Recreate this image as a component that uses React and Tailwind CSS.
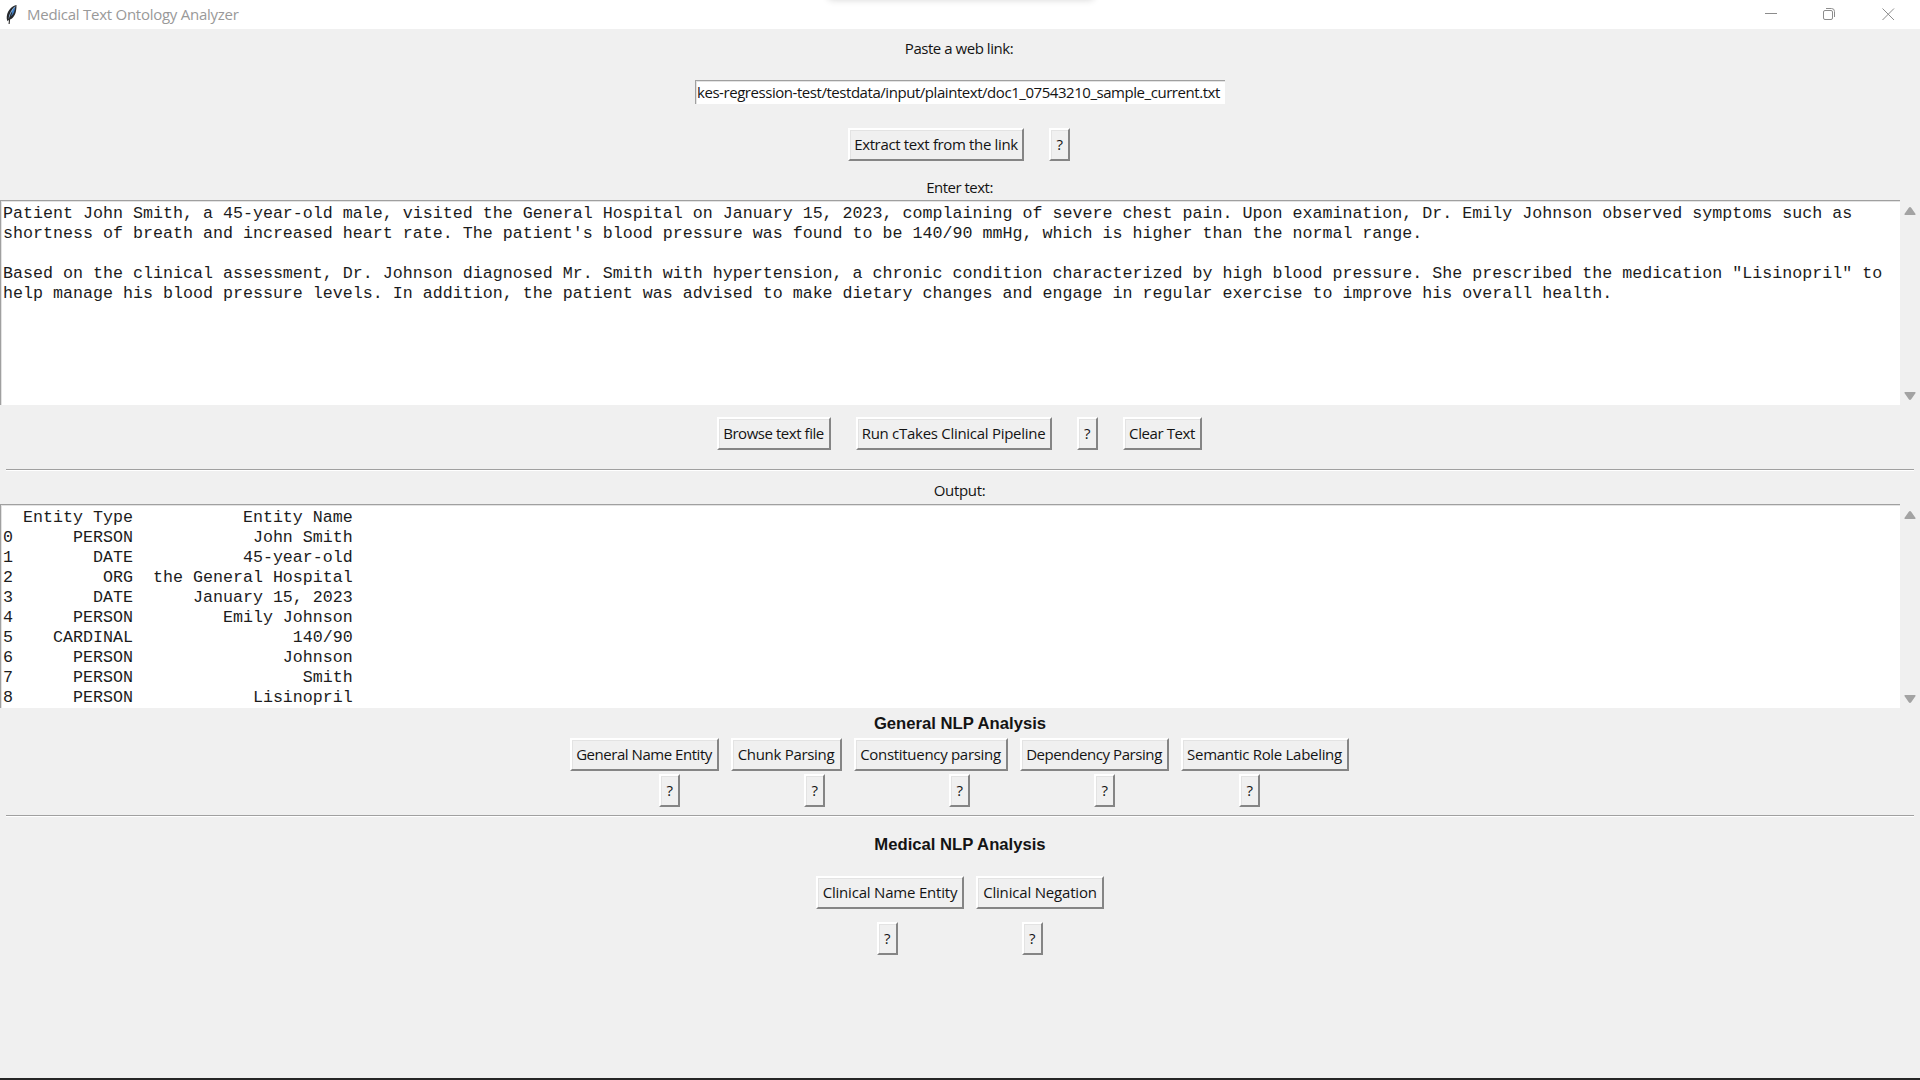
import React from "react";

const RAISED =
  "flex shrink-0 items-center justify-center whitespace-pre border-2 border-t-white border-l-white border-r-[#858585] border-b-[#858585] bg-[#f0f0f0] shadow-[inset_1px_1px_0_#e3e3e3]";

function Button({ children, className = "" }) {
  return <button className={`${RAISED} h-[33px] pb-px ${className}`}>{children}</button>;
}

function Help({ className = "" }) {
  return <Button className={`w-[21px] tracking-[-0.4px] ${className}`}>?</Button>;
}

function Separator({ className = "" }) {
  return <div className={`mx-[6px] h-[2px] border-t border-b border-t-[#a0a0a0] border-b-white ${className}`} />;
}

function Arrow({ down = false }) {
  return (
    <svg width="12" height="8" viewBox="0 0 12 8" fill="#a3a3a3">
      <path
        d={
          down
            ? "M1.2 0h9.6c.9 0 1 .7.6 1.3L7.2 7.2c-.7 1-1.7 1-2.4 0L.6 1.3C.2.7.3 0 1.2 0z"
            : "M1.2 8h9.6c.9 0 1-.7.6-1.3L7.2.8c-.7-1-1.7-1-2.4 0L.6 6.7C.2 7.3.3 8 1.2 8z"
        }
      />
    </svg>
  );
}

function TextPane({ text, className = "" }) {
  return (
    <div className={`flex w-full ${className}`}>
      <div className="h-full w-[1900px] overflow-hidden border-t border-l border-[#a0a0a0] bg-white pt-[3px] pl-[2px] shadow-[inset_1px_1px_0_#e3e3e3]">
        <pre className="font-['Liberation_Mono','Courier_New',monospace] text-[16.665px] leading-[20px] text-[#1c1c1c]">
          {text}
        </pre>
      </div>
      <div className="flex w-[20px] flex-col items-center justify-between pt-[7px] pb-[5px]">
        <Arrow />
        <Arrow down />
      </div>
    </div>
  );
}

const INPUT_TEXT = `Patient John Smith, a 45-year-old male, visited the General Hospital on January 15, 2023, complaining of severe chest pain. Upon examination, Dr. Emily Johnson observed symptoms such as
shortness of breath and increased heart rate. The patient's blood pressure was found to be 140/90 mmHg, which is higher than the normal range.

Based on the clinical assessment, Dr. Johnson diagnosed Mr. Smith with hypertension, a chronic condition characterized by high blood pressure. She prescribed the medication "Lisinopril" to
help manage his blood pressure levels. In addition, the patient was advised to make dietary changes and engage in regular exercise to improve his overall health.`;

const ENTITIES = [
  ["PERSON", "John Smith"],
  ["DATE", "45-year-old"],
  ["ORG", "the General Hospital"],
  ["DATE", "January 15, 2023"],
  ["PERSON", "Emily Johnson"],
  ["CARDINAL", "140/90"],
  ["PERSON", "Johnson"],
  ["PERSON", "Smith"],
  ["PERSON", "Lisinopril"],
];

const OUTPUT_TEXT = [["", "Entity Type", "Entity Name"], ...ENTITIES.map(([type, name], i) => [String(i), type, name])]
  .map(([index, type, name]) => index.padEnd(1) + type.padStart(12) + name.padStart(22))
  .join("\n");

function Feather() {
  return (
    <svg width="14" height="22" viewBox="0 0 14 22">
      <path d="M11.5 1C7 2 3 6 2 11c-.5 2.500-.4 4.500.6 6.200L4 15.800C8 15 10.300 11 11 7c.4-2.300.6-4.200.5-6z" fill="#26282c" />
      <path d="M10.300 2.400C8 4 5 8 4.300 13.500c3-1.500 4.700-4.500 5.400-7.500.3-1.300.6-2.500.6-3.600z" fill="#3f7cc0" />
      <path d="M10 2.600C7.500 5 4.600 9.500 4 14.500" stroke="#a9c8e8" strokeWidth=".8" fill="none" />
      <path d="M6.800 8.500C5 12 3.900 16 4.100 20" stroke="#2b2b2b" strokeWidth="1.100" fill="none" />
    </svg>
  );
}

function TitleBar() {
  return (
    <header className="relative flex h-[29px] items-center overflow-hidden bg-white">
      <div className="ml-[5px] flex h-full w-[22px] items-center">
        <Feather />
      </div>
      <span className="pb-[2px] whitespace-pre text-[15px] leading-[20px] tracking-[-0.26px] text-[#999]">
        Medical Text Ontology Analyzer
      </span>
      <div className="absolute -top-[10px] left-[828px] h-[10px] w-[266px] rounded shadow-[0_0_7px_rgba(0,0,0,0.16)]" />
      <svg className="mr-[25px] mb-px ml-auto" width="130" height="14" viewBox="0 0 130 14" fill="none" stroke="#8c8c8c">
        <path d="M0 6.500h12" />
        <rect x="58.500" y="3.500" width="9" height="9" rx="1.500" />
        <path d="M61 1.500h5.500a3 3 0 0 1 3 3V10" />
        <path d="M117.500 1.500l11.500 11.500M129 1.500L117.500 13" />
      </svg>
    </header>
  );
}

export default function App() {
  return (
    <div className="flex h-[1080px] w-[1920px] flex-col overflow-hidden border-b-2 border-[#262626] bg-[#f0f0f0] font-['Open_Sans','Noto_Sans',sans-serif] text-[15px] leading-[20px] text-[#141414]">
      <TitleBar />

      <div className="mt-[9px] pr-[2px] text-center tracking-[-0.46px]">Paste a web link:</div>
      <div className="mx-auto mt-[22px] flex h-[24px] w-[530px] items-center overflow-hidden border-t border-l border-[#a0a0a0] bg-white pb-[2px] pl-px whitespace-pre tracking-[-0.45px] shadow-[inset_1px_1px_0_#e3e3e3]">
        kes-regression-test/testdata/input/plaintext/doc1_07543210_sample_current.txt
      </div>
      <div className="mt-[24px] flex justify-center gap-[25px] pr-[2px]">
        <Button className="w-[176px] tracking-[-0.35px]">Extract text from the link</Button>
        <Help />
      </div>
      <div className="mt-[16px] mb-[3px] pr-px text-center tracking-[-0.5px]">Enter text:</div>
      <TextPane text={INPUT_TEXT} className="h-[205px]" />

      <div className="mt-[12px] flex justify-center gap-[25px] pr-[2px]">
        <Button className="w-[114px] tracking-[-0.45px]">Browse text file</Button>
        <Button className="w-[196px] tracking-[-0.28px]">Run cTakes Clinical Pipeline</Button>
        <Help />
        <Button className="w-[79px] tracking-[-0.41px]">Clear Text</Button>
      </div>
      <Separator className="mt-[19px]" />
      <div className="mt-[9px] mb-[4px] pr-px text-center tracking-[-0.32px]">Output:</div>
      <TextPane text={OUTPUT_TEXT} className="h-[204px]" />

      <h2 className="mt-[6px] text-center font-['Liberation_Sans',Arial,sans-serif] text-[16.667px] font-bold">
        General NLP Analysis
      </h2>
      <div className="mt-[4px] flex justify-center gap-[12px] pr-[2px]">
        <Button className="w-[149px] tracking-[-0.46px]">General Name Entity</Button>
        <Button className="w-[111px] tracking-[-0.3px]">Chunk Parsing</Button>
        <Button className="w-[154px] tracking-[-0.3px]">Constituency parsing</Button>
        <Button className="w-[149px] tracking-[-0.42px]">Dependency Parsing</Button>
        <Button className="w-[168px] tracking-[-0.3px]">Semantic Role Labeling</Button>
      </div>
      <div className="mt-[3px] flex justify-center gap-[124px] pr-px">
        <Help />
        <Help />
        <Help />
        <Help />
        <Help />
      </div>
      <Separator className="mt-[8px]" />

      <h2 className="mt-[18px] text-center font-['Liberation_Sans',Arial,sans-serif] text-[16.667px] font-bold">
        Medical NLP Analysis
      </h2>
      <div className="mt-[21px] flex justify-center gap-[12px]">
        <Button className="w-[148px] tracking-[-0.2px]">Clinical Name Entity</Button>
        <Button className="w-[128px] tracking-[-0.18px]">Clinical Negation</Button>
      </div>
      <div className="mt-[13px] flex justify-center gap-[124px] pr-px">
        <Help />
        <Help />
      </div>
    </div>
  );
}
